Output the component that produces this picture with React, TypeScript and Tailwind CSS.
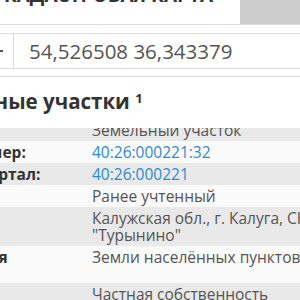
import React from "react";

const rows = [
  { label: "Тип:", value: "Земельный участок", pad: "pl-[8px]" },
  { label: "Кадастровый номер:", value: "40:26:000221:32", link: true, pad: "pl-[8px]" },
  { label: "Кадастровый квартал:", value: "40:26:000221", link: true, pad: "pl-[8px]" },
  { label: "Статус:", value: "Ранее учтенный", pad: "pl-[8px]" },
  { label: "Адрес:", value: "Калужская обл., г. Калуга, СНТ \"Турынино\"", pad: "pl-[8px]" },
  { label: "Категория", value: "Земли населённых пунктов", pad: "pl-[75px]", tall: true },
  { label: "Форма собств.:", value: "Частная собственность", pad: "pl-[8px]" },
];

export default function App() {
  return (
    <div className="w-[300px] h-[300px] overflow-hidden bg-white font-['Open_Sans',sans-serif]">
      {/* Top bar */}
      <div className="flex h-[25px] border-b border-[#dcdcdc]">
        <div className="flex-1 overflow-hidden">
          <div className="-mt-[19px] ml-[4px] whitespace-nowrap text-[19px] font-bold uppercase text-[#333]">
            Кадастровая карта
          </div>
        </div>
        <div className="w-[60px] bg-[#cdcdcd]" />
      </div>

      {/* Coordinates */}
      <div className="mt-[8px] flex h-[36px] border-y border-[#dcdcdc]">
        <div className="flex w-[14px] items-center border-r border-[#dcdcdc]">
          <span className="h-[2px] w-[3px] bg-[#555]" />
        </div>
        <div className="flex items-center pl-[15px] text-[20.5px] text-[#555]">54,526508 36,343379</div>
      </div>
      <div className="mt-[7px] border-t border-[#dcdcdc]" />

      {/* Heading */}
      <div className="-ml-[86px] mt-[10px] h-[28px] whitespace-nowrap text-[20.5px] font-bold leading-[28px] text-[#333]">
        Земельные участки <sup className="text-[13px]">1</sup>
      </div>

      {/* Table */}
      <div className="mt-[13px] h-[200px] overflow-hidden">
        <div className="-mt-[9px] -ml-[152px] w-[492px]">
          {rows.map((r, i) => (
            <div
              key={i}
              className={`grid grid-cols-[244px_1fr] py-[2.5px] text-[15.5px] leading-[17px] ${i % 2 === 0 ? "bg-[#e9e9e9]" : "bg-[#fafafa]"} ${r.tall ? "min-h-[37px]" : ""}`}
            >
              <div className={`${r.pad} pr-[4px] whitespace-nowrap font-bold text-[#333]`}>{r.label}</div>
              <div className={r.link ? "text-[#2f8ad3]" : "text-[#555]"}>{r.value}</div>
            </div>
          ))}
        </div>
      </div>
    </div>
  );
}
